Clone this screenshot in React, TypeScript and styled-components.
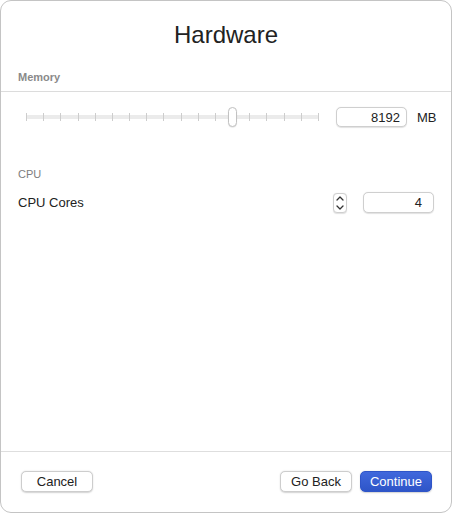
import React from "react";
import styled, { createGlobalStyle } from "styled-components";

const Global = createGlobalStyle`
  html, body { margin: 0; padding: 0; background: #ffffff; }
  body { font-family: "Liberation Sans", Arial, sans-serif; color: #222; }
  * { box-sizing: border-box; }
`;

const Window = styled.div`
  width: 452px;
  height: 513px;
  border: 1px solid #c4c4c4;
  border-radius: 11px;
  background: #fff;
  display: flex;
  flex-direction: column;
  overflow: hidden;
`;

const Title = styled.h1`
  margin: 0;
  padding-top: 19px;
  font-size: 24px;
  line-height: 30px;
  font-weight: 400;
  text-align: center;
  color: #222;
`;

const SectionLabel = styled.div<{ $bold?: boolean; $top: number; $divider?: boolean }>`
  margin-top: ${(p) => p.$top}px;
  padding: 0 17px ${(p) => (p.$divider ? 7 : 0)}px;
  font-size: 11px;
  line-height: 14px;
  font-weight: ${(p) => (p.$bold ? 700 : 400)};
  color: ${(p) => (p.$bold ? "#8a8a8a" : "#7d7d7d")};
  border-bottom: ${(p) => (p.$divider ? "1px solid #dcdcdc" : "none")};
`;

const Row = styled.div<{ $top: number; $left: number; $h: number }>`
  margin-top: ${(p) => p.$top}px;
  height: ${(p) => p.$h}px;
  padding: 0 17px 0 ${(p) => p.$left}px;
  display: flex;
  align-items: center;
`;

const SliderBox = styled.div`
  position: relative;
  width: 293px;
  height: 20px;
  flex: none;
`;

const Track = styled.div`
  position: absolute;
  left: 0;
  right: 0;
  top: 8px;
  height: 4px;
  background: #ebebeb;
  border-radius: 2px;
`;

const Ticks = styled.div`
  position: absolute;
  left: 0;
  right: 0;
  top: 6px;
  height: 8px;
  display: flex;
  justify-content: space-between;
`;

const Tick = styled.span`
  width: 1px;
  height: 8px;
  background: #cdcdcd;
`;

const Thumb = styled.div`
  position: absolute;
  top: 0;
  width: 9px;
  height: 20px;
  margin-left: -5px;
  border-radius: 5px;
  background: #fff;
  border: 0.5px solid #c2c2c2;
  box-shadow: 0 0.5px 1px rgba(0, 0, 0, 0.15);
`;

const Field = styled.div<{ $pr: number; $ml: number; $h: number }>`
  margin-left: ${(p) => p.$ml}px;
  width: 71px;
  height: ${(p) => p.$h}px;
  flex: none;
  border-radius: 5px;
  border: 0.5px solid #cfcfcf;
  box-shadow: 0 0.5px 1px rgba(0, 0, 0, 0.12);
  background: #fff;
  font-size: 13px;
  line-height: ${(p) => p.$h - 1}px;
  text-align: right;
  padding-right: ${(p) => p.$pr}px;
  color: #222;
`;

const Unit = styled.span`
  margin-left: 10px;
  font-size: 13px;
  color: #222;
`;

const RowLabel = styled.span`
  font-size: 13px;
  color: #222;
  flex: 1;
`;

const Stepper = styled.div`
  width: 14px;
  height: 20px;
  flex: none;
  border-radius: 4px;
  border: 0.5px solid #cfcfcf;
  box-shadow: 0 0.5px 1px rgba(0, 0, 0, 0.12);
  background: #fff;
  display: flex;
  flex-direction: column;
  align-items: center;
  justify-content: space-between;
  padding: 2px 0;
`;

const Spacer = styled.div`
  flex: 1;
`;

const Footer = styled.div`
  border-top: 1px solid #dedede;
  padding: 19px 19px 20px 20px;
  display: flex;
  align-items: center;
  gap: 8px;
`;

const Button = styled.button<{ $primary?: boolean }>`
  width: 72px;
  height: 21px;
  padding: 0;
  border-radius: 5px;
  font-family: "Liberation Sans", Arial, sans-serif;
  font-size: 13px;
  line-height: 20px;
  cursor: default;
  border: 0.5px solid ${(p) => (p.$primary ? "#2f55c8" : "#cdcdcd")};
  background: ${(p) => (p.$primary ? "linear-gradient(#4068dc, #2e55c8)" : "#fff")};
  color: ${(p) => (p.$primary ? "#fff" : "#222")};
  font-weight: ${(p) => (p.$primary ? 500 : 400)};
  box-shadow: 0 0.5px 1.5px rgba(0, 0, 0, 0.18);
`;

const Chevron = ({ up }: { up?: boolean }) => (
  <svg width="8" height="5" viewBox="0 0 8 5">
    <path
      d={up ? "M1 4 L4 1 L7 4" : "M1 1 L4 4 L7 1"}
      fill="none"
      stroke="#333"
      strokeWidth="1.3"
      strokeLinecap="round"
      strokeLinejoin="round"
    />
  </svg>
);

export default function App() {
  const ticks = Array.from({ length: 18 });
  const thumbPct = (12 / 17) * 100;
  return (
    <>
      <Global />
      <Window>
        <Title>Hardware</Title>
        <SectionLabel $bold $top={20} $divider>
          Memory
        </SectionLabel>
        <Row $top={15} $left={25} $h={20}>
          <SliderBox>
            <Track />
            <Ticks>
              {ticks.map((_, i) => (
                <Tick key={i} />
              ))}
            </Ticks>
            <Thumb style={{ left: `${thumbPct}%` }} />
          </SliderBox>
          <Field $ml={17} $pr={6} $h={20}>
            8192
          </Field>
          <Unit>MB</Unit>
        </Row>
        <SectionLabel $top={40}>CPU</SectionLabel>
        <Row $top={11} $left={17} $h={21}>
          <RowLabel>CPU Cores</RowLabel>
          <Stepper>
            <Chevron up />
            <Chevron />
          </Stepper>
          <Field $ml={16} $pr={11} $h={21}>
            4
          </Field>
        </Row>
        <Spacer />
        <Footer>
          <Button>Cancel</Button>
          <Spacer />
          <Button>Go Back</Button>
          <Button $primary>Continue</Button>
        </Footer>
      </Window>
    </>
  );
}
